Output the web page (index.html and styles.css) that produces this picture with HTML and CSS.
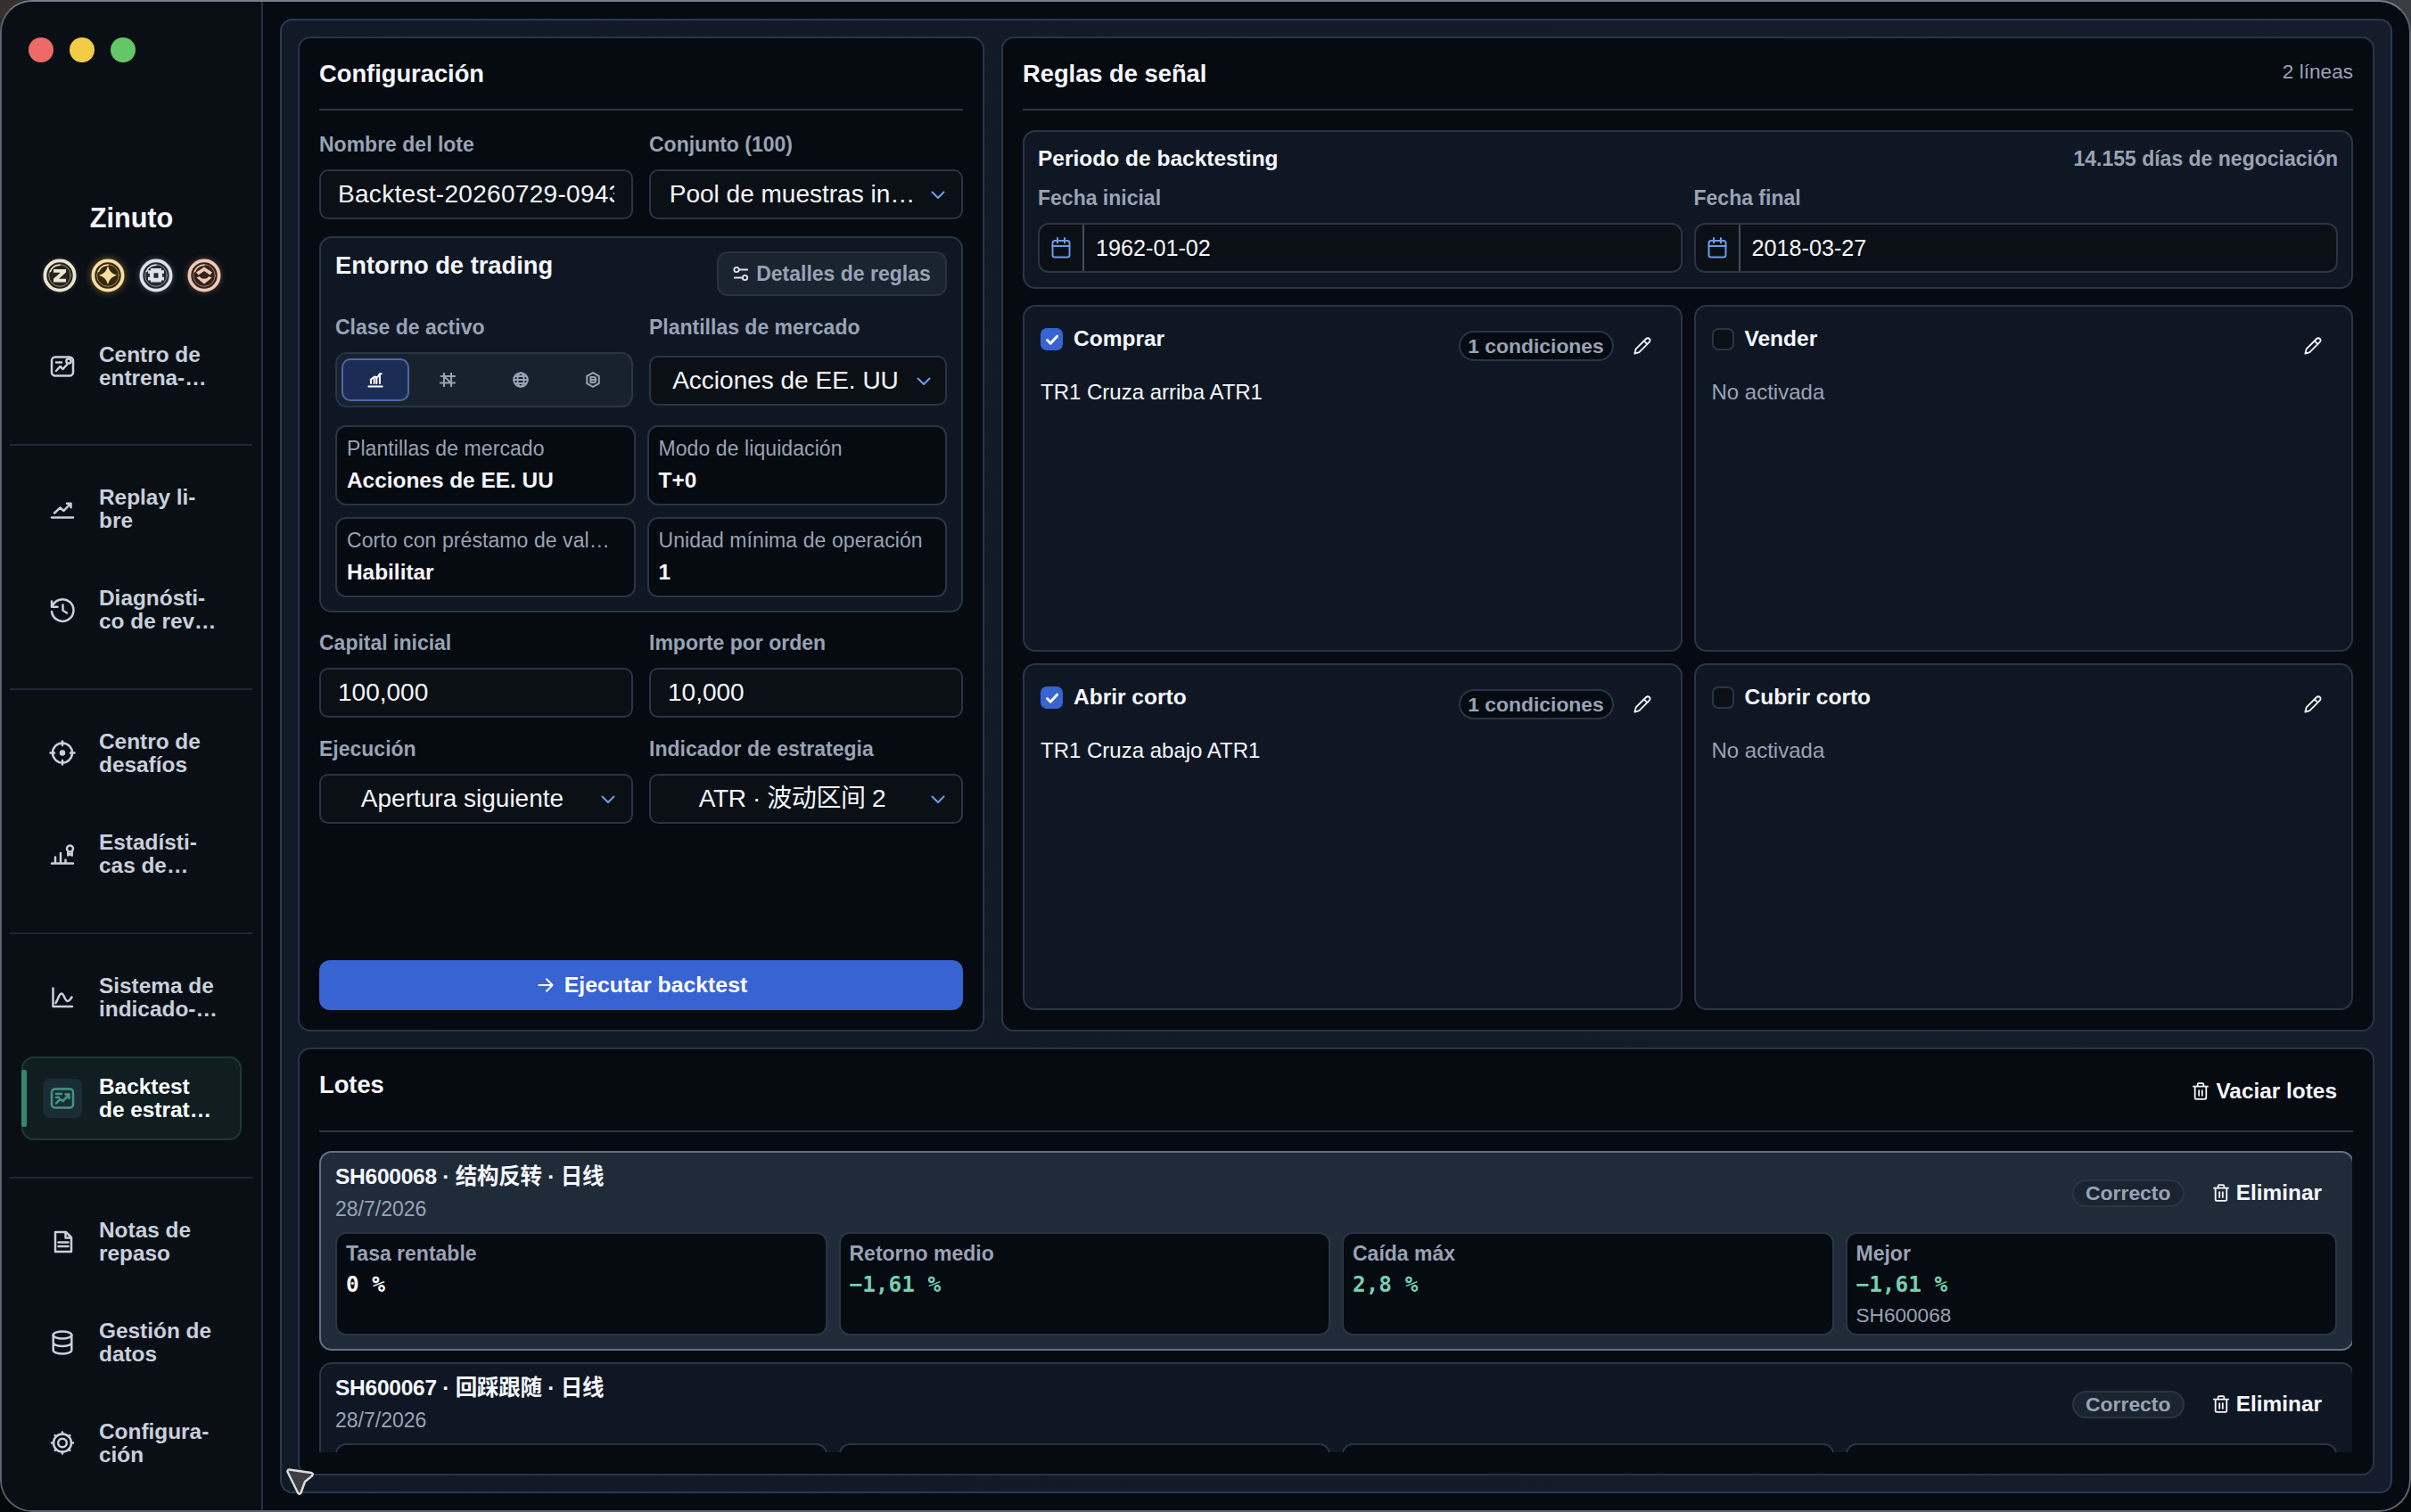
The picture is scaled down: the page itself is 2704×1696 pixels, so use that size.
FILE: index.html
```html
<!DOCTYPE html>
<html lang="es">
<head>
  <meta charset="UTF-8">
  <meta name="viewport" content="width=device-width, initial-scale=1.0">
  <title>Zinuto - Backtest de estrategia</title>
  <link rel="stylesheet" href="styles.css">
</head>
<body>
  <!-- Shared icons -->
  <svg class="sprite" aria-hidden="true">
    <symbol id="i-chevron" viewBox="0 0 16 10"><path d="M1.5 1.5 8 8l6.500-6.500"/></symbol>
    <symbol id="i-calendar" viewBox="0 0 22 24"><rect x="1.500" y="4" width="19" height="18.500" rx="2.500"/><path d="M1.500 10h19M7 1v5.500M15 1v5.500"/></symbol>
    <symbol id="i-pencil" viewBox="0 0 22 22"><path d="M1.500 20.500 3 14.800 15.600 2.200a2.800 2.800 0 0 1 4 0a2.800 2.800 0 0 1 0 4L7 18.900ZM13 4.900l4 4"/></symbol>
    <symbol id="i-trash" viewBox="0 0 20 22"><path d="M1 5h18M6.300 5V2.500a1.300 1.300 0 0 1 1.300-1.300h4.800a1.300 1.300 0 0 1 1.300 1.300V5M3 5v14a1.800 1.800 0 0 0 1.800 1.800h10.400A1.800 1.800 0 0 0 17 19V5M8 10v6.500M12 10v6.500"/></symbol>
    <symbol id="i-check" viewBox="0 0 16 16"><path d="m2.500 8.500 3.700 3.700 7.300-8"/></symbol>
    <symbol id="i-medal" viewBox="0 0 38 38"><circle cx="19" cy="19" r="16.600" stroke-width="3.800"/><circle cx="19" cy="19" r="12.300" stroke-width="1" opacity=".55" fill="none"/><path d="M8.500 14.500A11.500 11.500 0 0 1 19 7.200" stroke-width="1.600" fill="none"/></symbol>
  </svg>

  <div class="window">
    <aside class="sidebar">
      <div class="lights"><span class="red"></span><span class="yellow"></span><span class="green"></span></div>
      <h1 class="brand">Zinuto</h1>
      <div class="badges">
        <svg class="medal cream" viewBox="0 0 38 38"><use href="#i-medal"/><path class="glyph" d="M12 12h14v3.500L18 22.800h8V26.500H12v-3.800l7.800-7H12Z"/></svg>
        <svg class="medal gold" viewBox="0 0 38 38"><use href="#i-medal"/><path class="glyph" d="M19 8q1.800 9 10 10.700q-8.200 2-10 10.300q-1.800-8.300-10-10.300q8.200-1.700 10-10.700Z"/></svg>
        <svg class="medal silver" viewBox="0 0 38 38"><use href="#i-medal"/><path class="glyph" fill-rule="evenodd" d="M13 11h12v2.200h3v3.600h-2v4h2v3.600h-3V26.500H13v-2.100h-3v-3.600h2v-4h-2v-3.600h3ZM16.500 16.200v5.600h5v-5.600Z"/></svg>
        <svg class="medal copper" viewBox="0 0 38 38"><use href="#i-medal"/><path class="glyph" d="m19 9.500 9 6-2.500 3-6.500-4.500-6.500 4.500-2.500-3ZM10.500 21.500l3-1.500 3 2.500h5l3-2.500 3 1.500L19 28.500Z"/></svg>
      </div>

      <nav class="nav">
        <div class="nav-group">
          <a class="nav-item"><span class="nav-icon"><svg viewBox="0 0 26 26"><rect x="1" y="2.500" width="24" height="21" rx="4"/><path d="M6 8.500h6M6 18l4.500-5 3 3 5.500-6"/><circle cx="20" cy="7" r="2.600"/></svg></span><span>Centro de<br>entrena-…</span></a>
        </div>
        <div class="nav-group">
          <a class="nav-item"><span class="nav-icon"><svg viewBox="0 0 26 26"><path d="M1 22.500h24M4 17.500l6.500-6 4 3.500L22 7M18 6.800h4.500v4.500"/></svg></span><span>Replay li-<br>bre</span></a>
          <a class="nav-item"><span class="nav-icon"><svg viewBox="0 0 26 26"><path d="M1 3.500v6.300h6.500M1.500 9.800A12.300 12.300 0 1 1 1 15M13.500 7.500v6.300l4.500 2.700"/></svg></span><span>Diagnósti-<br>co de rev…</span></a>
        </div>
        <div class="nav-group">
          <a class="nav-item"><span class="nav-icon"><svg viewBox="0 0 26 26"><circle cx="13" cy="12.500" r="11"/><circle class="solid" cx="13" cy="12.500" r="2"/><path d="M13-.500v4.500M13 21v4.500M-.500 12.500H4M22 12.500h4.500"/></svg></span><span>Centro de<br>desafíos</span></a>
          <a class="nav-item"><span class="nav-icon"><svg viewBox="0 0 26 26"><path d="M1 23.500h24M5 23.500v-7M11 23.500V12M16.500 23.500v-4"/><circle cx="21.500" cy="7" r="3.500"/><path d="M19.300 10v4.500l2.200-1.500 2.200 1.500V10"/></svg></span><span>Estadísti-<br>cas de…</span></a>
        </div>
        <div class="nav-group">
          <a class="nav-item"><span class="nav-icon"><svg viewBox="0 0 26 26"><path d="M2.500 2.500v20.500h21.500M5.500 19C8 16 9 8.500 12 8.500S15.500 17 19 17c2.500 0 3-3 4.500-4.500"/></svg></span><span>Sistema de<br>indicado-…</span></a>
          <a class="nav-item active"><span class="nav-icon"><svg viewBox="0 0 26 26"><rect x="1" y="2.500" width="24" height="21" rx="3.500"/><path d="M6 8h6M6 12h3M6 18.500l4.500-4.500 3 2L20 9.500M16.500 8.500h4V13"/></svg></span><span>Backtest<br>de estrat…</span></a>
        </div>
        <div class="nav-group">
          <a class="nav-item"><span class="nav-icon"><svg viewBox="0 0 26 26"><path d="M5 2h12l6 6v16H5ZM16.500 2v6.500H23M8.500 13.500h11M8.500 18h11"/></svg></span><span>Notas de<br>repaso</span></a>
          <a class="nav-item"><span class="nav-icon"><svg viewBox="0 0 26 26"><ellipse cx="13" cy="4.500" rx="10.300" ry="4"/><path d="M2.700 4.500v17c0 2.200 4.600 4 10.300 4s10.300-1.800 10.300-4v-17M2.700 13c0 2.200 4.600 4 10.300 4s10.300-1.800 10.300-4"/></svg></span><span>Gestión de<br>datos</span></a>
          <a class="nav-item"><span class="nav-icon"><svg viewBox="0 0 26 26"><circle cx="13" cy="12.500" r="10"/><circle cx="13" cy="12.500" r="4.800"/><path d="M13 .500v2M13 22.500v2M1 12.500h2M23 12.500h2M4.700 4.200l1.100 1.100M20.200 19.700l1.100 1.100M4.700 20.800l1.100-1.100M20.200 5.300l1.100-1.100"/></svg></span><span>Configura-<br>ción</span></a>
        </div>
      </nav>
    </aside>

    <main class="main">
      <div class="workspace">

        <section class="panel config">
          <header class="panel-head"><h2>Configuración</h2></header>
          <div class="row">
            <div class="field"><label>Nombre del lote</label><div class="input"><span class="clip">Backtest-20260729-0943</span></div></div>
            <div class="field"><label>Conjunto (100)</label><div class="input select"><span>Pool de muestras in…</span><svg class="chevron"><use href="#i-chevron"/></svg></div></div>
          </div>

          <div class="environment">
            <div class="env-head">
              <h3>Entorno de trading</h3>
              <button class="rules-btn"><svg viewBox="0 0 20 20"><circle cx="4.500" cy="5" r="3"/><path d="M7.500 5H18M2 15h10"/><circle cx="15" cy="15" r="3"/></svg>Detalles de reglas</button>
            </div>
            <div class="row">
              <div class="field"><label>Clase de activo</label>
                <div class="segmented">
                  <span class="seg active"><svg viewBox="0 0 20 20"><path d="M1.500 18.300h17M4.500 14.500V9.500M8.500 14.500V7M11.500 14.500V7M15.500 14.500V3.500M4 10l5-4 3 1.500 3.500-5h2"/></svg></span>
                  <span class="seg"><svg viewBox="0 0 20 20"><path d="M2 5.500h17M1 14h18M5.500 2v16M14.500 2v16M5.500 5.500l9 8.500"/></svg></span>
                  <span class="seg"><svg viewBox="0 0 20 20"><circle cx="10" cy="10" r="8.700"/><ellipse cx="10" cy="10" rx="4" ry="8.700"/><path d="M1.500 10h17M3 5.500h14M3 14.500h14"/></svg></span>
                  <span class="seg"><svg viewBox="0 0 20 20"><path d="m10 1.200 7.500 4.200v9.200L10 18.800l-7.500-4.200V5.400Z"/><path d="M7 6.700h4.200a2.300 3.300 0 0 1 0 6.600H7ZM8.500 10h4"/></svg></span>
                </div>
              </div>
              <div class="field"><label>Plantillas de mercado</label><div class="input select"><span>Acciones de EE. UU</span><svg class="chevron"><use href="#i-chevron"/></svg></div></div>
            </div>
            <div class="facts">
              <div class="fact"><span>Plantillas de mercado</span><b>Acciones de EE. UU</b></div>
              <div class="fact"><span>Modo de liquidación</span><b>T+0</b></div>
              <div class="fact"><span>Corto con préstamo de val…</span><b>Habilitar</b></div>
              <div class="fact"><span>Unidad mínima de operación</span><b>1</b></div>
            </div>
          </div>

          <div class="row">
            <div class="field"><label>Capital inicial</label><div class="input"><span>100,000</span></div></div>
            <div class="field"><label>Importe por orden</label><div class="input"><span>10,000</span></div></div>
          </div>
          <div class="row">
            <div class="field"><label>Ejecución</label><div class="input select"><span>Apertura siguiente</span><svg class="chevron"><use href="#i-chevron"/></svg></div></div>
            <div class="field"><label>Indicador de estrategia</label><div class="input select"><span class="tight">ATR · 波动区间 2</span><svg class="chevron"><use href="#i-chevron"/></svg></div></div>
          </div>
          <button class="run-btn"><svg viewBox="0 0 20 20"><path d="M1.500 10h17M11 2.500l7.500 7.500-7.500 7.500"/></svg>Ejecutar backtest</button>
        </section>

        <section class="panel rules">
          <header class="panel-head"><h2>Reglas de señal</h2><span class="count">2 líneas</span></header>
          <div class="period">
            <div class="period-head"><h4>Periodo de backtesting</h4><span>14.155 días de negociación</span></div>
            <div class="dates">
              <div class="field"><label>Fecha inicial</label><div class="input date"><i><svg><use href="#i-calendar"/></svg></i><span>1962-01-02</span></div></div>
              <div class="field"><label>Fecha final</label><div class="input date"><i><svg><use href="#i-calendar"/></svg></i><span>2018-03-27</span></div></div>
            </div>
          </div>
          <div class="rule-grid">
            <article class="rule">
              <div class="rule-head"><span class="check on"><svg><use href="#i-check"/></svg></span><h4>Comprar</h4><span class="pill dark">1 condiciones</span><button class="edit"><svg><use href="#i-pencil"/></svg></button></div>
              <p>TR1 Cruza arriba ATR1</p>
            </article>
            <article class="rule">
              <div class="rule-head"><span class="check"></span><h4>Vender</h4><button class="edit"><svg><use href="#i-pencil"/></svg></button></div>
              <p class="muted">No activada</p>
            </article>
            <article class="rule">
              <div class="rule-head"><span class="check on"><svg><use href="#i-check"/></svg></span><h4>Abrir corto</h4><span class="pill dark">1 condiciones</span><button class="edit"><svg><use href="#i-pencil"/></svg></button></div>
              <p>TR1 Cruza abajo ATR1</p>
            </article>
            <article class="rule">
              <div class="rule-head"><span class="check"></span><h4>Cubrir corto</h4><button class="edit"><svg><use href="#i-pencil"/></svg></button></div>
              <p class="muted">No activada</p>
            </article>
          </div>
        </section>

        <section class="panel lots">
          <header class="panel-head"><h2>Lotes</h2><button class="text-btn"><svg><use href="#i-trash"/></svg>Vaciar lotes</button></header>
          <div class="lot-list">
            <article class="lot selected">
              <div class="lot-head">
                <div><h4>SH600068 · 结构反转 · 日线</h4><time>28/7/2026</time></div>
                <span class="pill">Correcto</span>
                <button class="text-btn"><svg><use href="#i-trash"/></svg>Eliminar</button>
              </div>
              <div class="stats">
                <div class="stat"><span>Tasa rentable</span><b>0 %</b></div>
                <div class="stat"><span>Retorno medio</span><b class="green-text">−1,61 %</b></div>
                <div class="stat"><span>Caída máx</span><b class="green-text">2,8 %</b></div>
                <div class="stat"><span>Mejor</span><b class="green-text">−1,61 %</b><small>SH600068</small></div>
              </div>
            </article>
            <article class="lot">
              <div class="lot-head">
                <div><h4>SH600067 · 回踩跟随 · 日线</h4><time>28/7/2026</time></div>
                <span class="pill">Correcto</span>
                <button class="text-btn"><svg><use href="#i-trash"/></svg>Eliminar</button>
              </div>
              <div class="stats">
                <div class="stat"></div>
                <div class="stat"></div>
                <div class="stat"></div>
                <div class="stat"></div>
              </div>
            </article>
          </div>
        </section>

      </div>
    </main>
  </div>

  <svg class="cursor" viewBox="0 0 34 34"><path d="M5.500 3.500 30 7q3 1 1 3.500L23 17l-4.500 12.500q-1.700 2.500-3.400 0L3.500 6q-.500-2.500 2-2.500Z"/></svg>
</body>
</html>
```

FILE: styles.css
```css
* {
  box-sizing: border-box;
}

:root {
  --bg: #060a11;
  --side: #0a0f16;
  --surface: #101724;
  --input: #0b1016;
  --line: #293545;
  --text: #f5f7fb;
  --muted: #98a3b5;
  --blue: #3763d3;
}

body {
  margin: 0;
  width: 2704px;
  height: 1696px;
  overflow: hidden;
  background: linear-gradient(90deg, #35302c, #3b3c42) top / 100% 50% no-repeat #050607;
  color: var(--text);
  font-family: "Liberation Sans", "Noto Sans CJK SC", sans-serif;
  font-size: 23px;
  line-height: 28px;
}

h1, h2, h3, h4, p {
  margin: 0;
}

button {
  font: inherit;
  color: inherit;
  background: none;
  border: none;
  padding: 0;
}

svg {
  fill: none;
  stroke: currentColor;
  stroke-width: 2;
  stroke-linecap: round;
  stroke-linejoin: round;
  overflow: visible;
  flex: none;
}

.sprite {
  position: absolute;
  width: 0;
  height: 0;
}

/* symbols take their paint from the place of use */
.sprite symbol {
  overflow: visible;
}

.window {
  display: flex;
  width: 2704px;
  height: 1696px;
  border: 2px solid #59636f;
  border-top-color: #747f8c;
  border-radius: 36px;
  background: var(--bg);
  overflow: hidden;
}

/* Sidebar */
.sidebar {
  width: 293px;
  flex: none;
  border-right: 2px solid #263140;
  background: var(--side);
  padding-top: 40px;
}

.lights {
  display: flex;
  gap: 18px;
  padding-left: 30px;
}

.lights span {
  width: 28px;
  height: 28px;
  border-radius: 50%;
}

.lights .red { background: #ed6a66; }
.lights .yellow { background: #f3cc45; }
.lights .green { background: #64c767; }

.brand {
  margin-top: 156px;
  line-height: 36px;
  font-size: 30.600px;
  text-align: center;
}

.badges {
  display: flex;
  justify-content: space-between;
  margin: 28px 45px 0 46px;
  height: 38px;
}

.medal {
  width: 38px;
  height: 38px;
}

.medal .glyph {
  stroke: none;
  fill: currentColor;
}

.cream { color: #ece5d0; fill: #25231e; filter: drop-shadow(0 0 2px #6b665488); }
.gold { color: #f7dfa3; fill: #35280c; filter: drop-shadow(0 0 4px #c79a3399); }
.silver { color: #dde2ea; fill: #242a33; filter: drop-shadow(0 0 3px #7d8ba588); }
.copper { color: #eccab5; fill: #35211a; filter: drop-shadow(0 0 3px #a0654899); }

.nav {
  margin-top: 36px;
}

.nav-group {
  display: flex;
  flex-direction: column;
  gap: 19px;
  margin: 0 10px 0 9px;
  padding: 24px 0 41px;
}

.nav-group:first-child {
  padding: 0 0 40px;
}

.nav-group + .nav-group {
  border-top: 2px solid #1d2834;
}

.nav-item {
  position: relative;
  display: flex;
  align-items: center;
  height: 94px;
  margin: 0 12px 0 13px;
  padding-left: 22px;
  border: 2px solid transparent;
  border-radius: 14px;
  color: #c9cfdc;
  font-size: 24.400px;
  font-weight: bold;
  line-height: 26px;
}

.nav-icon {
  display: flex;
  align-items: center;
  justify-content: center;
  width: 44px;
  height: 44px;
  margin-right: 19px;
  border-radius: 8px;
}

.nav-icon svg {
  width: 26px;
  height: 26px;
  stroke-width: 2.500;
}

.nav-icon .solid {
  fill: currentColor;
}

.nav-item.active {
  background: #101e22;
  border-color: #1b3a35;
  color: #fff;
}

.nav-item.active::before {
  content: "";
  position: absolute;
  left: -2px;
  top: 13px;
  width: 6px;
  height: 64px;
  border-radius: 2px;
  background: #36866f;
}

.nav-item.active .nav-icon {
  background: #1a2c35;
  color: #459480;
}

/* Workspace */
.main {
  flex: 1;
  padding: 19px;
}

.workspace {
  display: grid;
  grid-template-columns: 770px 1fr;
  grid-template-rows: 1116px 1fr;
  gap: 18px 19px;
  height: 100%;
  padding: 18px;
  border: 2px solid #2a3a52;
  border-radius: 14px;
  background: linear-gradient(90deg, #111a27, #151c2b);
}

.panel {
  display: flex;
  flex-direction: column;
  min-height: 0;
  padding: 0 22px 22px;
  border: 2px solid var(--line);
  border-radius: 14px;
  background: var(--bg);
}

.panel-head {
  display: flex;
  justify-content: space-between;
  align-items: flex-start;
  height: 81px;
  flex: none;
  padding-top: 24px;
  border-bottom: 2px solid var(--line);
}

h2, h3 {
  font-size: 27.300px;
  line-height: 32px;
}

h4 {
  font-size: 24.500px;
  line-height: 28px;
}

.count {
  color: var(--muted);
  font-size: 22.600px;
}

.row {
  display: grid;
  grid-template-columns: 1fr 1fr;
  gap: 18px;
  margin-top: 21px;
}

.panel-head + .row {
  margin-top: 24px;
}

.field {
  min-width: 0;
}

.field label {
  display: block;
  margin-bottom: 14px;
  color: var(--muted);
  font-weight: bold;
}

.environment + .row {
  margin-top: 20px;
}

.input {
  position: relative;
  display: flex;
  align-items: center;
  height: 56px;
  padding: 0 19px;
  border: 2px solid var(--line);
  border-radius: 10px;
  background: var(--input);
  font-size: 28px;
  white-space: nowrap;
}

.clip {
  overflow: hidden;
  letter-spacing: .300px;
}

.tight {
  letter-spacing: -.400px;
}

.input.select {
  justify-content: center;
  padding: 0 49px 0 18px;
}

.chevron {
  position: absolute;
  right: 18px;
  top: 22px;
  width: 16px;
  height: 10px;
  color: #6e9bf0;
}

/* Trading environment */
.environment {
  margin-top: 19px;
  padding: 15px 16px;
  border: 2px solid var(--line);
  border-radius: 14px;
  background: var(--surface);
}

.env-head {
  display: flex;
  justify-content: space-between;
  height: 50px;
}

.rules-btn {
  display: flex;
  align-items: center;
  justify-content: center;
  gap: 8px;
  width: 258px;
  height: 50px;
  border: 2px solid #263241;
  border-radius: 12px;
  background: #1a2431;
  color: var(--muted);
  font-weight: bold;
}

.rules-btn svg {
  width: 18px;
  height: 18px;
  color: #dfe4ec;
}

.segmented {
  display: grid;
  grid-template-columns: repeat(4, 1fr);
  gap: 6px;
  height: 62px;
  padding: 5px;
  border: 2px solid var(--line);
  border-radius: 13px;
  background: #18212e;
}

.seg {
  display: flex;
  align-items: center;
  justify-content: center;
  color: #98a3b4;
}

.seg svg {
  width: 18px;
  height: 18px;
  stroke-width: 2.200;
}

.seg.active {
  border: 2px solid #4c68a8;
  border-radius: 10px;
  background: #1c2d55;
  color: #fff;
}

.environment .select {
  margin-top: 18px;
  padding-right: 46px;
}

.environment .chevron {
  right: 16px;
}

.facts {
  display: grid;
  grid-template-columns: 1fr 1fr;
  gap: 13px;
  margin-top: 20px;
}

.fact {
  display: flex;
  flex-direction: column;
  gap: 8px;
  height: 90px;
  padding: 10px 11px 0;
  border: 2px solid var(--line);
  border-radius: 12px;
  background: var(--bg);
  white-space: nowrap;
}

.fact span {
  color: var(--muted);
  letter-spacing: .080px;
}

.fact b {
  font-size: 24.400px;
}

.run-btn {
  display: flex;
  align-items: center;
  justify-content: center;
  gap: 12px;
  height: 56px;
  margin-top: auto;
  padding-left: 3px;
  border-radius: 12px;
  background: var(--blue);
  color: #fff;
  font-size: 24.800px;
  font-weight: bold;
}

.run-btn svg {
  width: 18px;
  height: 18px;
}

/* Signal rules */
.period {
  margin-top: 22px;
  padding: 16px 15px;
  border: 2px solid var(--line);
  border-radius: 14px;
  background: var(--surface);
}

.period-head {
  display: flex;
  justify-content: space-between;
  margin-bottom: 16px;
}

.period-head span {
  color: var(--muted);
  font-size: 23px;
  font-weight: bold;
}

.dates {
  display: grid;
  grid-template-columns: 1fr 1fr;
  gap: 13px;
}

.input.date {
  padding: 0;
  border-radius: 12px;
  font-size: 25.200px;
}

.date i {
  display: flex;
  align-items: center;
  justify-content: center;
  width: 50px;
  height: 100%;
  margin-right: 13px;
  border-right: 2px solid #414d5b;
  color: #6f9aea;
}

.date svg {
  width: 22px;
  height: 24px;
}

.rule-grid {
  flex: 1;
  display: grid;
  grid-template-columns: 1fr 1fr;
  grid-template-rows: 1fr 1fr;
  gap: 13px;
  margin-top: 18px;
}

.rule {
  padding: 19px 18px;
  border: 2px solid var(--line);
  border-radius: 14px;
  background: var(--surface);
  font-size: 24px;
}

.rule-head {
  display: flex;
  align-items: flex-start;
  height: 50px;
  margin-bottom: 13px;
}

.rule-head h4 {
  flex: 1;
  margin-top: 3px;
}

.check {
  display: flex;
  align-items: center;
  justify-content: center;
  width: 25px;
  height: 25px;
  margin: 5px 12px 0 0;
  border: 2px solid var(--line);
  border-radius: 7px;
  background: var(--input);
}

.check.on {
  background: var(--blue);
  border-color: var(--blue);
}

.check svg {
  width: 16px;
  height: 16px;
  stroke-width: 3;
}

.pill {
  display: flex;
  align-items: center;
  justify-content: center;
  width: 126px;
  height: 31px;
  border: 2px solid var(--line);
  border-radius: 17px;
  background: #1a2431;
  color: var(--muted);
  font-size: 22.900px;
  font-weight: bold;
}

.pill.dark {
  width: 174px;
  height: 34px;
  margin: 8px 7px 0 0;
  background: var(--bg);
}

.edit {
  display: flex;
  align-items: center;
  justify-content: center;
  width: 50px;
  height: 50px;
}

.edit svg {
  width: 20px;
  height: 20px;
}

.muted {
  color: var(--muted);
}

/* Lots */
.lots {
  grid-column: 1 / -1;
  padding-bottom: 24px;
}

.lots .panel-head {
  height: 93px;
}

.text-btn {
  display: flex;
  align-items: center;
  gap: 8px;
  font-size: 24.400px;
  font-weight: bold;
}

.text-btn svg {
  width: 18px;
  height: 20px;
}

.panel-head .text-btn {
  margin: 9px 18px 0 0;
}

.lot-list {
  flex: 1;
  min-height: 0;
  margin-top: 21px;
  margin-right: 1px;
  overflow: hidden;
}

/* cards run slightly past the scroll viewport */
.lot {
  width: calc(100% + 2px);
  height: 224px;
  margin-bottom: 13px;
  padding: 13px 17px 15px 16px;
  border: 2px solid var(--line);
  border-radius: 14px;
  background: var(--surface);
}

.lot h4 {
  letter-spacing: -.250px;
}

.lot.selected {
  border-color: #617083;
  background: #202b3a;
}

.lot.selected .stat,
.lot.selected .pill {
  border-color: #2a3544;
}

.lot-head {
  display: flex;
  align-items: center;
  height: 64px;
  padding-right: 17px;
}

.lot-head > div {
  flex: 1;
}

.lot-head time {
  display: block;
  margin-top: 8px;
  color: var(--muted);
}

.lot-head .text-btn {
  margin-left: 32px;
}

.stats {
  display: grid;
  grid-template-columns: repeat(4, 1fr);
  gap: 13px;
  margin-top: 12px;
}

.stat {
  display: flex;
  flex-direction: column;
  gap: 7px;
  height: 116px;
  padding: 8px 10px;
  border: 2px solid var(--line);
  border-radius: 12px;
  background: var(--bg);
  color: var(--muted);
}

.stat span {
  font-weight: bold;
}

.stat b {
  color: #fff;
  font-family: "DejaVu Sans Mono", monospace;
  font-size: 24.400px;
}

.stat b.green-text {
  color: #74d0b2;
}

.stat small {
  font-size: 22.600px;
}

.cursor {
  position: absolute;
  left: 319px;
  top: 1645px;
  width: 34px;
  height: 34px;
  fill: #3d4043;
  stroke: #dcdcdc;
  stroke-width: 2.400;
}
```
